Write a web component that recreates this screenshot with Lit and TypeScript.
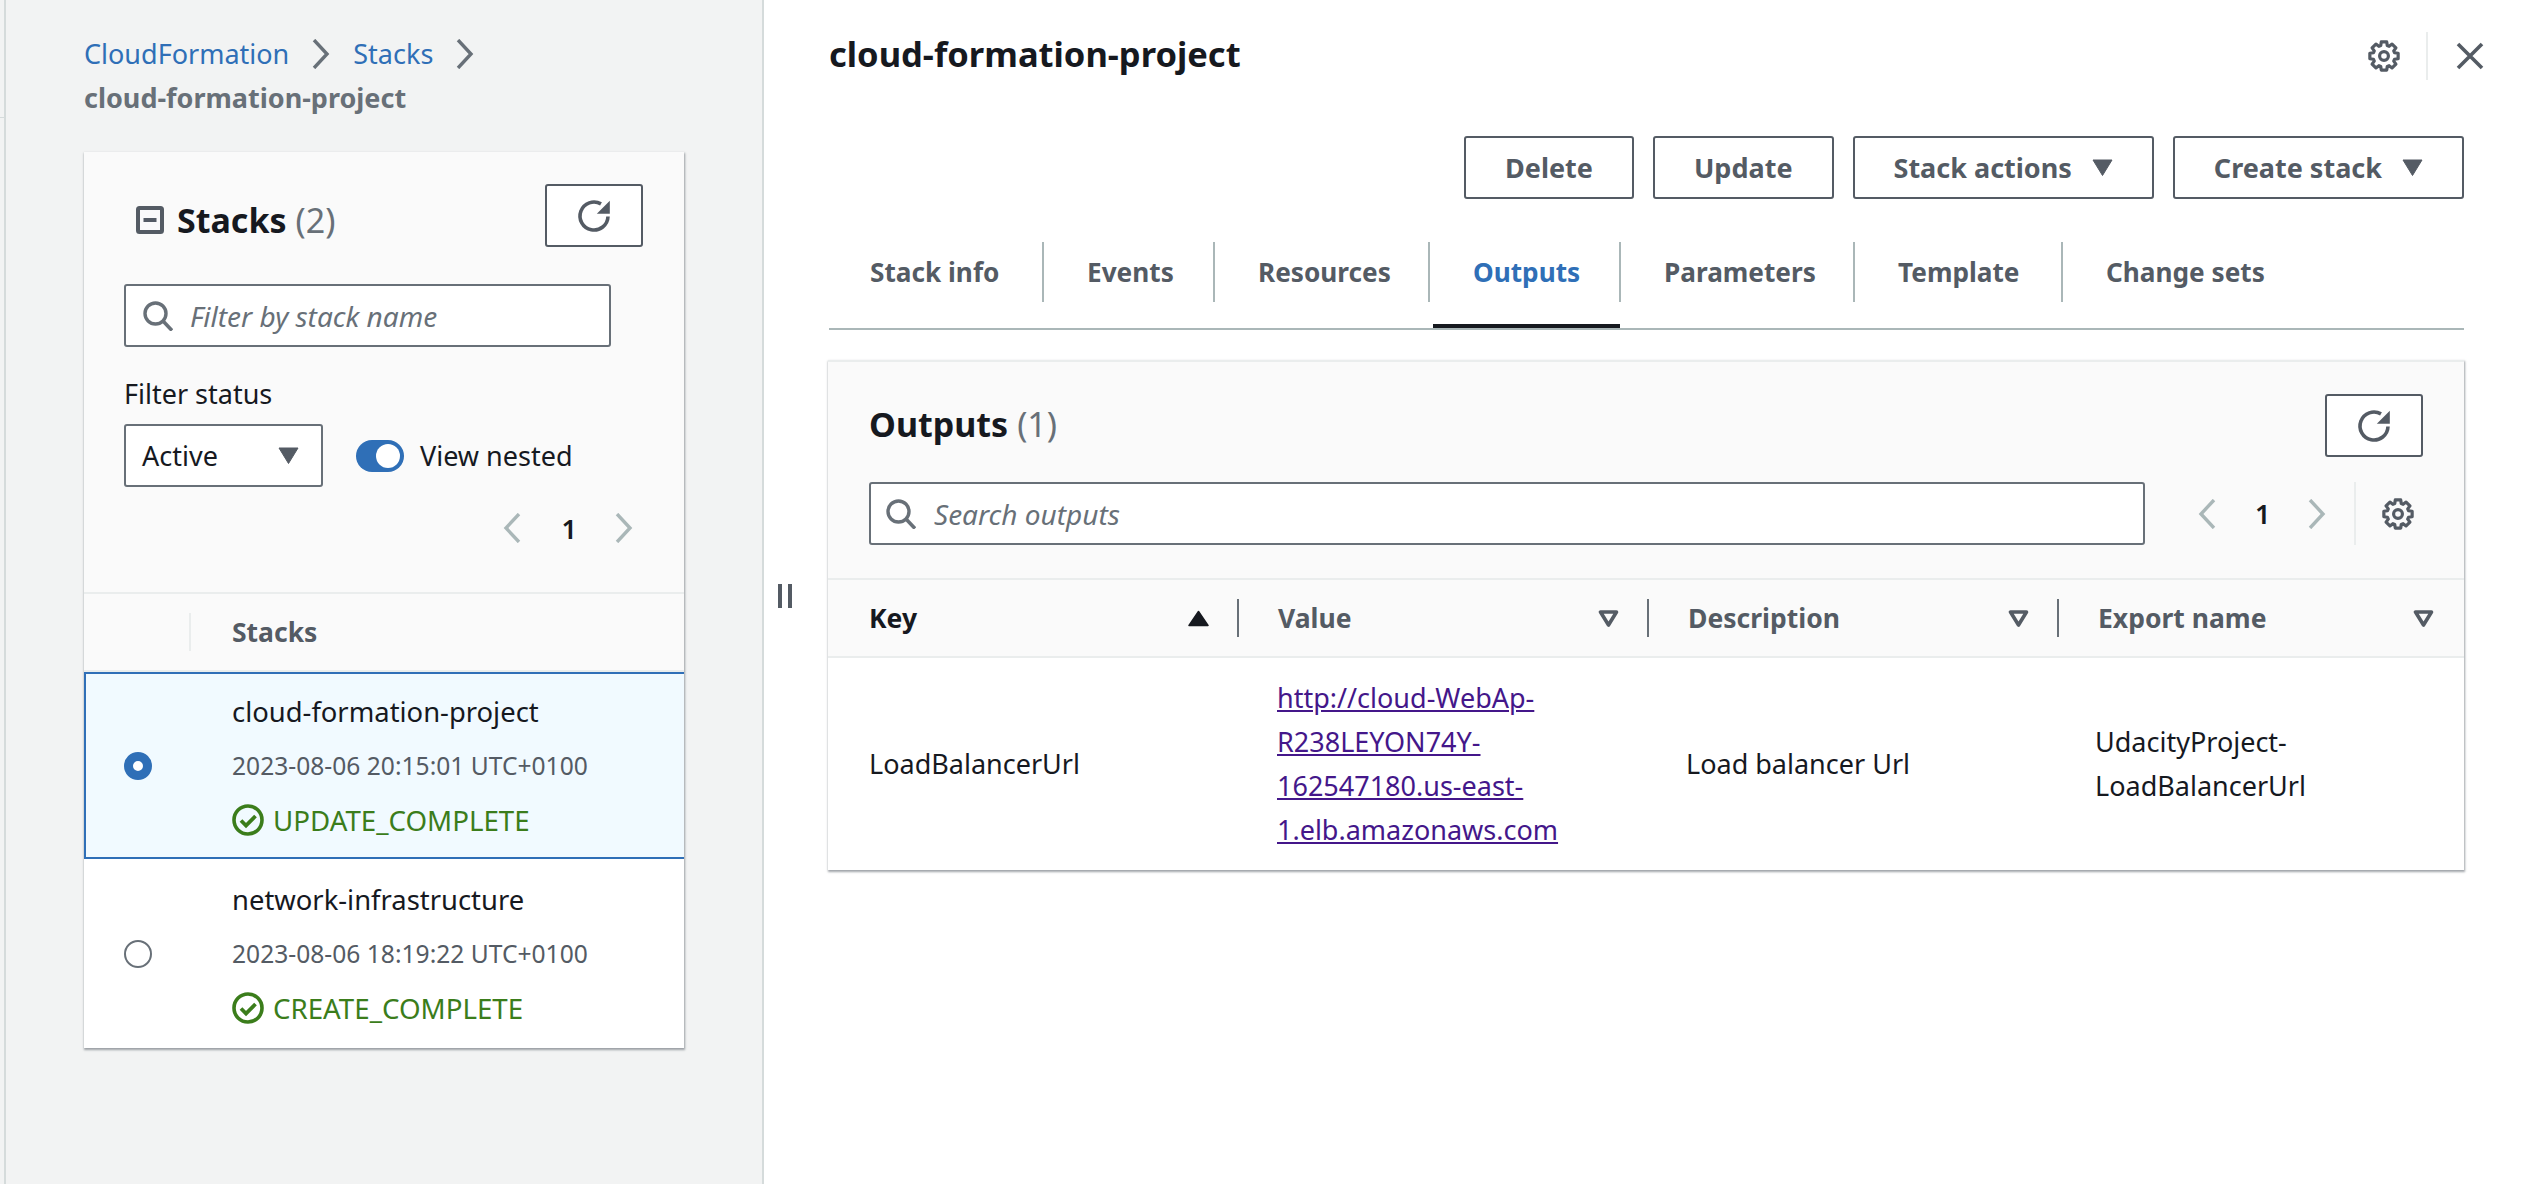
import { LitElement, css, html, svg } from "lit";
import { customElement } from "lit/decorators.js";

const chevron = (dir: "left" | "right") => html`<svg width="18" height="30" viewBox="0 0 18 30">
  <path d=${dir === "right" ? "M2 1l13 14L2 29" : "M16 1L3 15l13 14"} fill="none" stroke="currentColor" stroke-width="3.4"/>
</svg>`;

const refreshIcon = html`<svg width="36" height="36" viewBox="-2 -1 36 36">
  <path d="M23 4.9A14 14 0 1 0 30 17.5" fill="none" stroke="currentColor" stroke-width="3.6"/>
  <path d="M31.8 1.7v13H18.8z" fill="currentColor"/>
</svg>`;

const searchIcon = html`<svg width="30" height="30" viewBox="0 0 30 30">
  <circle cx="12.5" cy="12.5" r="10.5" fill="none" stroke="currentColor" stroke-width="3.4"/>
  <path d="M20 20l9 9.5" fill="none" stroke="currentColor" stroke-width="3.6"/>
</svg>`;

function gearPath() {
  // 8 toothed gear outline, centre 16,16
  const pts: string[] = [];
  for (let i = 0; i < 8; i++) {
    const a = (i * Math.PI) / 4;
    const corners: [number, number][] = [
      [11, a - 0.3],
      [14.4, a - 0.19],
      [14.4, a + 0.19],
      [11, a + 0.3],
    ];
    for (const [r, t] of corners) {
      pts.push(`${(16 + r * Math.sin(t)).toFixed(2)} ${(16 - r * Math.cos(t)).toFixed(2)}`);
    }
  }
  return "M" + pts.join("L") + "Z";
}

const gearIcon = html`<svg width="32" height="32" viewBox="0 0 32 32">
  ${svg`<path d=${gearPath()} fill="none" stroke="currentColor" stroke-width="3.2" stroke-linejoin="round"/>`}
  <circle cx="16" cy="16" r="4.4" fill="none" stroke="currentColor" stroke-width="3.2"/>
</svg>`;

const okIcon = html`<svg class="ok" width="32" height="32" viewBox="0 0 32 32">
  <circle cx="16" cy="16" r="14" fill="none" stroke="currentColor" stroke-width="3.6"/>
  <path d="M9 16.5l5 5 9.5-9.5" fill="none" stroke="currentColor" stroke-width="3.8"/>
</svg>`;

const caretDown = html`<svg class="caret" width="21" height="17" viewBox="0 0 21 17">
  <path d="M1 1h19L10.5 16.5z" fill="currentColor" stroke="currentColor" stroke-linejoin="round"/>
</svg>`;

const filterCaret = html`<svg width="21" height="17" viewBox="0 0 21 17">
  <path d="M2.5 2h16l-8 13z" fill="none" stroke="currentColor" stroke-width="3.6" stroke-linejoin="round"/>
</svg>`;

const sortUp = html`<svg width="21" height="17" viewBox="0 0 21 17">
  <path d="M10.5 1.5L20 15.5H1z" fill="currentColor" stroke="currentColor" stroke-width="1.5" stroke-linejoin="round"/>
</svg>`;

const font = css`
  * {
    box-sizing: border-box;
  }
`;

@customElement("stacks-panel")
export class StacksPanel extends LitElement {
  static styles = [
    font,
    css`
      :host {
        display: block;
        width: 600px;
        background: #fff;
        box-shadow: 0 1px 2px 0.5px rgba(84, 91, 100, 0.55);
      }
      .top {
        background: #fafafa;
        height: 442px;
        border-bottom: 2px solid #eaeded;
        padding-top: 32px;
      }
      .title-row {
        display: flex;
        align-items: center;
        justify-content: space-between;
        height: 63px;
        padding: 0 41px 0 52px;
      }
      .title {
        display: flex;
        align-items: center;
        padding-top: 9px;
        font-size: 34px;
        font-weight: 700;
        color: #16191f;
      }
      .title svg {
        margin-right: 13px;
      }
      .count {
        font-weight: 400;
        color: #687078;
        margin-left: 9px;
      }
      .refresh {
        width: 98px;
        height: 63px;
        border: 2px solid #545b64;
        border-radius: 3px;
        background: #fff;
        color: #545b64;
        display: flex;
        align-items: center;
        justify-content: center;
      }
      .filter {
        display: flex;
        align-items: center;
        margin: 37px 0 0 40px;
        width: 487px;
        height: 63px;
        border: 2px solid #687078;
        border-radius: 3px;
        background: #fff;
        padding-left: 17px;
        color: #687078;
        font-style: italic;
        font-size: 28px;
        gap: 17px;
      }
      .filter span {
        color: #687078;
      }
      .label {
        margin: 27px 0 0 40px;
        line-height: 40px;
        color: #16191f;
      }
      .controls {
        display: flex;
        align-items: center;
        margin: 10px 0 0 40px;
      }
      .select {
        display: flex;
        align-items: center;
        justify-content: space-between;
        width: 199px;
        height: 63px;
        border: 2px solid #687078;
        border-radius: 3px;
        background: #fff;
        padding: 0 22px 0 16px;
        color: #16191f;
      }
      .select svg {
        color: #545b64;
      }
      .toggle {
        width: 48px;
        height: 32px;
        border-radius: 16px;
        background: #2f6fb7;
        margin: 0 16px 0 33px;
        display: flex;
        align-items: center;
        justify-content: flex-end;
        padding-right: 4px;
      }
      .toggle i {
        display: block;
        width: 24px;
        height: 24px;
        border-radius: 50%;
        background: #fff;
      }
      .pager {
        display: flex;
        align-items: center;
        justify-content: flex-end;
        height: 40px;
        margin-top: 21px;
        padding-right: 51px;
        color: #16191f;
        font-weight: 600;
      }
      .pager svg {
        color: #aab7b8;
      }
      .pager span {
        margin: 0 38px 0 41px;
      }
      .head {
        display: grid;
        grid-template-columns: 107px 1fr;
        align-items: center;
        height: 78px;
        background: #fafafa;
        border-bottom: 2px solid #eaeded;
        font-size: 26.5px;
        font-weight: 700;
        color: #545b64;
      }
      .head i {
        display: block;
        height: 38px;
        border-right: 2px solid #eaeded;
      }
      .head span {
        padding-left: 41px;
      }
      .row {
        display: grid;
        grid-template-columns: 148px 1fr;
        align-items: center;
        height: 189px;
        padding-top: 1px;
      }
      .row.selected {
        height: 187px;
        background: #f1faff;
        border: 2px solid #2f6fb7;
        border-right: 0;
        padding-top: 0;
      }
      .row.selected .radio {
        margin-left: 38px;
      }
      .row.selected .cell {
        margin-left: -2px;
      }
      .radio {
        width: 28px;
        height: 28px;
        border-radius: 50%;
        margin-left: 40px;
        border: 2px solid #687078;
        background: #fff;
      }
      .selected .radio {
        border: 9px solid #2f6fb7;
      }
      .cell div {
        line-height: 54px;
        height: 54px;
        white-space: nowrap;
      }
      .name {
        font-size: 27.4px;
        color: #16191f;
      }
      .time {
        font-size: 24.6px;
        color: #545b64;
      }
      .status {
        display: flex;
        align-items: center;
        gap: 9px;
        font-size: 27.7px;
        color: #3b7d1b;
      }
    `,
  ];

  rows = [
    { name: "cloud-formation-project", time: "2023-08-06 20:15:01 UTC+0100", status: "UPDATE_COMPLETE", selected: true },
    { name: "network-infrastructure", time: "2023-08-06 18:19:22 UTC+0100", status: "CREATE_COMPLETE", selected: false },
  ];

  render() {
    return html`
      <div class="top">
        <div class="title-row">
          <div class="title">
            <svg width="28" height="28" viewBox="0 0 28 28">
              <rect x="2" y="2" width="24" height="24" rx="1.5" fill="none" stroke="#545b64" stroke-width="4"/>
              <rect x="7.5" y="12" width="13" height="4" fill="#545b64"/>
            </svg>
            Stacks<span class="count">(2)</span>
          </div>
          <div class="refresh">${refreshIcon}</div>
        </div>
        <div class="filter">${searchIcon}<span>Filter by stack name</span></div>
        <div class="label">Filter status</div>
        <div class="controls">
          <div class="select">Active ${caretDown}</div>
          <div class="toggle"><i></i></div>
          <span>View nested</span>
        </div>
        <div class="pager">${chevron("left")}<span>1</span>${chevron("right")}</div>
      </div>
      <div class="head"><i></i><span>Stacks</span></div>
      ${this.rows.map(
        (r) => html`<div class="row ${r.selected ? "selected" : ""}">
          <div class="radio"></div>
          <div class="cell">
            <div class="name">${r.name}</div>
            <div class="time">${r.time}</div>
            <div class="status">${okIcon}${r.status}</div>
          </div>
        </div>`
      )}
    `;
  }
}

@customElement("outputs-panel")
export class OutputsPanel extends LitElement {
  static styles = [
    font,
    css`
      :host {
        display: block;
        width: 1636px;
        margin: 30px 0 0 -1px;
        background: #fff;
        border-top: 2px solid #eaeded;
        box-shadow: 0 1px 2px 0.5px rgba(84, 91, 100, 0.55);
      }
      .top {
        background: #fafafa;
        height: 218px;
        padding: 32px 41px 0;
        border-bottom: 2px solid #eaeded;
      }
      .title-row {
        display: flex;
        align-items: center;
        justify-content: space-between;
        height: 63px;
      }
      .title {
        padding-bottom: 3px;
        font-size: 34px;
        font-weight: 700;
        color: #16191f;
      }
      .count {
        font-weight: 400;
        color: #687078;
        margin-left: 9px;
      }
      .refresh {
        width: 98px;
        height: 63px;
        border: 2px solid #545b64;
        border-radius: 3px;
        background: #fff;
        color: #545b64;
        display: flex;
        align-items: center;
        justify-content: center;
      }
      .search-row {
        display: flex;
        align-items: center;
        margin-top: 25px;
        height: 63px;
      }
      .search {
        display: flex;
        align-items: center;
        gap: 18px;
        width: 1276px;
        height: 63px;
        border: 2px solid #687078;
        border-radius: 3px;
        background: #fff;
        padding-left: 15px;
        color: #687078;
        font-style: italic;
        font-size: 28px;
      }
      .pager {
        display: flex;
        align-items: center;
        margin-left: 53px;
        height: 63px;
        font-weight: 600;
        color: #aab7b8;
      }
      .pager span {
        margin: 0 38px 0 39px;
        color: #16191f;
      }
      .pager .gear {
        display: flex;
        align-items: center;
        height: 63px;
        margin-left: 28px;
        padding-left: 26px;
        border-left: 2px solid #eaeded;
        color: #545b64;
      }
      .grid {
        display: grid;
        grid-template-columns: 411px 410px 410px 405px;
      }
      .th {
        display: flex;
        align-items: center;
        height: 78px;
        padding-left: 39px;
        background: #fafafa;
        border-bottom: 2px solid #eaeded;
        font-size: 26.5px;
        font-weight: 700;
        color: #545b64;
      }
      .th.sorted {
        padding-left: 41px;
        color: #16191f;
      }
      .th span {
        flex: 1;
      }
      .th svg {
        color: #545b64;
      }
      .th.sorted svg {
        color: #16191f;
      }
      .th i {
        display: block;
        width: 2px;
        height: 38px;
        margin-left: 28px;
        background: #687078;
      }
      .th.last {
        padding-right: 30px;
      }
      .td {
        display: flex;
        align-items: center;
        height: 212px;
        line-height: 44px;
        padding: 0 28px 0 37px;
        color: #16191f;
      }
      .td.first {
        padding-left: 41px;
      }
      .td.value {
        padding-left: 38px;
      }
      .td.last {
        padding-left: 36px;
      }
      a {
        color: #44178a;
        text-decoration: underline;
      }
    `,
  ];

  render() {
    return html`
      <div class="top">
        <div class="title-row">
          <div class="title">Outputs<span class="count">(1)</span></div>
          <div class="refresh">${refreshIcon}</div>
        </div>
        <div class="search-row">
          <div class="search">${searchIcon}<span>Search outputs</span></div>
          <div class="pager">
            ${chevron("left")}<span>1</span>${chevron("right")}
            <div class="gear">${gearIcon}</div>
          </div>
        </div>
      </div>
      <div class="grid">
        <div class="th sorted"><span>Key</span>${sortUp}<i></i></div>
        <div class="th"><span>Value</span>${filterCaret}<i></i></div>
        <div class="th"><span>Description</span>${filterCaret}<i></i></div>
        <div class="th last"><span>Export name</span>${filterCaret}</div>
        <div class="td first">LoadBalancerUrl</div>
        <div class="td value">
          <a href="#">http://cloud-WebAp-<wbr />R238LEYON74Y-<wbr />162547180.us-east-<wbr />1.elb.amazonaws.com</a>
        </div>
        <div class="td">Load balancer Url</div>
        <div class="td last"><span>UdacityProject-<wbr />LoadBalancerUrl</span></div>
      </div>
    `;
  }
}

@customElement("app-root")
export class AppRoot extends LitElement {
  static styles = [
    font,
    css`
      :host {
        display: flex;
        width: 2528px;
        height: 1184px;
        overflow: hidden;
        background: #fff;
        font-family: "Noto Sans", "Open Sans", sans-serif;
        font-size: 27px;
        color: #16191f;
      }
      .side {
        position: relative;
        width: 764px;
        height: 1184px;
        background: linear-gradient(#d5dbdb, #d5dbdb) 4px 0 / 2px 100% no-repeat, #f2f3f3;
        border-right: 2px solid #d5dbdb;
        padding: 32px 0 0 84px;
      }
      .side::before {
        content: "";
        position: absolute;
        left: 0;
        top: 117px;
        width: 4px;
        height: 1px;
        background: #d5dbdb;
      }
      .crumbs {
        display: flex;
        flex-wrap: wrap;
        align-items: center;
        width: 600px;
        height: 88px;
        margin-bottom: 32px;
        line-height: 44px;
      }
      .crumbs a {
        color: #2f6fb7;
      }
      .crumbs svg {
        color: #687078;
        margin: 0 23px;
      }
      .crumbs b {
        flex-basis: 100%;
        color: #687078;
        font-weight: 700;
      }
      .handle {
        display: flex;
        align-items: center;
        gap: 6px;
        width: 65px;
        padding: 8px 0 0 14px;
      }
      .handle i {
        display: block;
        width: 4px;
        height: 24px;
        background: #545b64;
      }
      .main {
        width: 1635px;
      }
      .head {
        display: flex;
        align-items: center;
        justify-content: space-between;
        height: 110px;
      }
      .head h1 {
        margin: 0;
        padding-bottom: 3px;
        font-size: 34.5px;
        font-weight: 700;
        color: #16191f;
      }
      .tools {
        display: flex;
        align-items: center;
        color: #545b64;
        margin-right: -20px;
        padding-top: 2px;
      }
      .tools .sep {
        width: 2px;
        height: 48px;
        margin: 0 28px 0 26px;
        background: #eaeded;
      }
      .actions {
        display: flex;
        justify-content: flex-end;
        gap: 19px;
        margin-top: 26px;
      }
      .btn {
        display: flex;
        align-items: center;
        gap: 20px;
        height: 63px;
        padding: 0 39px;
        border: 2px solid #545b64;
        border-radius: 3px;
        font-weight: 700;
        color: #545b64;
      }
      .tabs {
        display: flex;
        margin-top: 43px;
        border-bottom: 2px solid #aab7b8;
      }
      .tab {
        position: relative;
        height: 86px;
        line-height: 61px;
        padding-left: 43px;
        white-space: nowrap;
        font-size: 26.2px;
        font-weight: 700;
        color: #545b64;
      }
      .tab:first-child {
        padding-left: 41px;
      }
      .tab:not(:last-child)::after {
        content: "";
        position: absolute;
        right: 0;
        top: 0;
        width: 2px;
        height: 60px;
        background: #aab7b8;
      }
      .tab.active {
        color: #2f6fb7;
      }
      .tab.active::before {
        content: "";
        position: absolute;
        left: 3px;
        right: 1px;
        bottom: 0;
        height: 4px;
        background: #16191f;
      }
    `,
  ];

  tabs = [
    { label: "Stack info", width: 215 },
    { label: "Events", width: 171 },
    { label: "Resources", width: 215 },
    { label: "Outputs", width: 191 },
    { label: "Parameters", width: 234 },
    { label: "Template", width: 208 },
    { label: "Change sets", width: 200 },
  ];

  render() {
    return html`
      <aside class="side">
        <nav class="crumbs">
          <a>CloudFormation</a>${chevron("right")}<a>Stacks</a>${chevron("right")}
          <b>cloud-formation-project</b>
        </nav>
        <stacks-panel></stacks-panel>
      </aside>
      <div class="handle"><i></i><i></i></div>
      <main class="main">
        <div class="head">
          <h1>cloud-formation-project</h1>
          <div class="tools">
            ${gearIcon}
            <div class="sep"></div>
            <svg width="28" height="28" viewBox="0 0 28 28">
              <path d="M2 2l24 24M26 2L2 26" fill="none" stroke="currentColor" stroke-width="3.6"/>
            </svg>
          </div>
        </div>
        <div class="actions">
          <div class="btn">Delete</div>
          <div class="btn">Update</div>
          <div class="btn">Stack actions ${caretDown}</div>
          <div class="btn">Create stack ${caretDown}</div>
        </div>
        <div class="tabs">
          ${this.tabs.map(
            (t) => html`<div class="tab ${t.label === "Outputs" ? "active" : ""}" style="width:${t.width}px">${t.label}</div>`
          )}
        </div>
        <outputs-panel></outputs-panel>
      </main>
    `;
  }
}
